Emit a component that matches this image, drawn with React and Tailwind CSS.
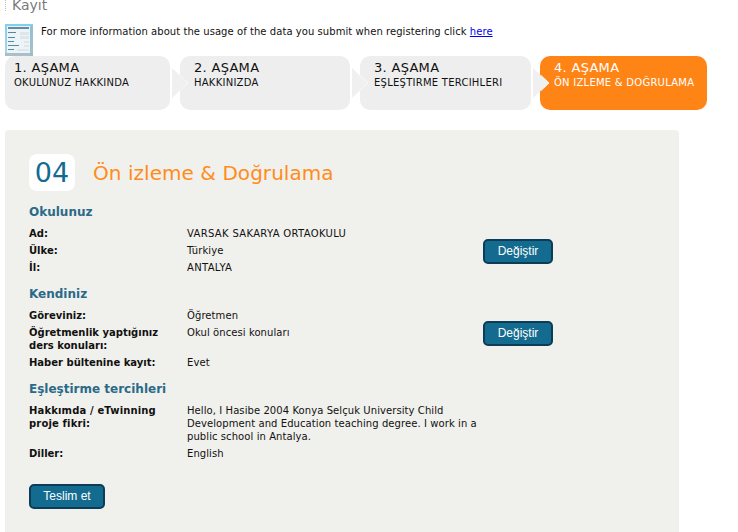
const steps = [
  { no: "1. AŞAMA", text: "OKULUNUZ HAKKINDA", width: "w-[165px] pl-[9px]" },
  { no: "2. AŞAMA", text: "HAKKINIZDA", width: "w-[170px] pl-[14px]" },
  { no: "3. AŞAMA", text: "EŞLEŞTIRME TERCIHLERI", width: "w-[171px] pl-[14px]" },
  { no: "4. AŞAMA", text: "ÖN IZLEME & DOĞRULAMA", width: "w-[167px] pl-[14px]", active: true },
];

const Row = ({ label, children }) => (
  <div className="flex py-[2px]">
    <div className="w-[158px] shrink-0 pr-3 font-bold">{label}</div>
    <div className="flex-1 tracking-[0.08px]">{children}</div>
  </div>
);

const Btn = ({ children, className = "" }) => (
  <button
    className={`h-[25px] rounded-[5px] border-2 border-[#0d3d56] bg-[#136b8f] text-[12px] text-white font-['Liberation_Sans',sans-serif] ${className}`}
  >
    {children}
  </button>
);

const DocIcon = () => (
  <svg width="28" height="32" viewBox="0 0 28 32" className="shrink-0">
    <defs>
      <linearGradient id="frame" x1="0" y1="0" x2="0" y2="1">
        <stop offset="0" stopColor="#7fd0ee" />
        <stop offset="1" stopColor="#b5d3df" />
      </linearGradient>
    </defs>
    <rect x="0" y="0" width="28" height="32" fill="url(#frame)" />
    <rect x="2" y="2" width="23" height="27" fill="#eef4f6" />
    <rect x="3" y="3" width="21" height="2" fill="#5f8da3" />
    <rect x="3" y="8" width="8" height="1" fill="#4f8aa6" />
    <rect x="15" y="8" width="9" height="3" fill="#dde7eb" />
    <rect x="3" y="13" width="7" height="1" fill="#4f8aa6" />
    <rect x="15" y="12" width="9" height="3" fill="#dde7eb" />
    <rect x="3" y="17" width="6" height="1" fill="#4f8aa6" />
    <rect x="19" y="17" width="5" height="2" fill="#dde7eb" />
    <rect x="3" y="21" width="11" height="1" fill="#4f8aa6" />
    <rect x="19" y="21" width="5" height="2" fill="#dde7eb" />
    <rect x="3" y="25" width="6" height="1" fill="#4f8aa6" />
    <rect x="12" y="25" width="12" height="2" fill="#dde7eb" />
    <rect x="25" y="2" width="3" height="30" fill="#9fb4bd" opacity="0.6" />
    <rect x="0" y="29" width="28" height="3" fill="#9fb4bd" opacity="0.6" />
  </svg>
);

export default function App() {
  return (
    <div className="w-[738px] h-[532px] overflow-hidden bg-white font-['DejaVu_Sans',sans-serif] text-[#111] text-[10px] leading-[13px]">
      <div className="h-[24px] pl-[5px] flex items-start">
        <div className="h-[11px] border-l border-dotted border-[#bbb]" />
        <span className="ml-[6px] -mt-[5px] text-[14px] leading-[20px] text-[#7a7a7a]">Kayıt</span>
      </div>

      <div className="h-[32px] pl-[5px] flex items-start">
        <DocIcon />
        <p className="ml-[8px] mt-[1px] text-[10px] tracking-[0.06px]">
          For more information about the usage of the data you submit when registering click{" "}
          <a href="#" className="text-[#0000ee] underline">here</a>
        </p>
      </div>

      <div className="pl-[5px] flex gap-[10px]">
        {steps.map((s, i) => (
          <div
            key={s.no}
            className={`relative h-[54px] rounded-[10px] pt-[5px] ${s.width} ${
              s.active ? "-ml-[1px] bg-[#ff8416] text-white" : "bg-[#eeeeee]"
            }`}
          >
            <div className="text-[13px] leading-[14px] tracking-[0.3px]">{s.no}</div>
            <div className="mt-[2px] text-[10px] leading-[12px] tracking-[0.25px]">{s.text}</div>
            {i < 3 && (
              <svg width="16" height="30" viewBox="0 0 16 30" className="absolute left-[calc(100%+2px)] top-[12px] z-10">
                <path d="M0 0 L16 15 L0 30 Z" fill="#f0f0f0" />
                <path d="M8 7.5 L16 15 L8 22.5" fill="none" stroke="#f8f8f8" />
              </svg>
            )}
          </div>
        ))}
      </div>

      <div className="ml-[5px] mt-[20px] w-[674px] h-[420px] rounded-[4px] bg-[#f0f0ec] pl-[24px] pt-[24px]">
        <div className="flex items-center">
          <div className="w-[46px] h-[37px] rounded-[8px] bg-white text-center text-[27px] leading-[37px] text-[#136b8f]">04</div>
          <h1 className="ml-[18px] mt-[1px] text-[20px] leading-[26px] tracking-[0.05px] text-[#ff8c1a]">Ön izleme &amp; Doğrulama</h1>
        </div>

        <h2 className="mt-[13px] text-[12px] leading-[16px] font-bold text-[#2a6a88]">Okulunuz</h2>
        <div className="mt-[5px] flex items-start">
          <div className="w-[454px]">
            <Row label="Ad:"><span className="tracking-[0.33px]">VARSAK SAKARYA ORTAOKULU</span></Row>
            <Row label="Ülke:">Türkiye</Row>
            <Row label="İl:"><span className="tracking-[0.33px]">ANTALYA</span></Row>
          </div>
          <Btn className="mt-[14px] w-[70px]">Değiştir</Btn>
        </div>

        <h2 className="mt-[10px] text-[12px] leading-[16px] font-bold text-[#2a6a88]">Kendiniz</h2>
        <div className="mt-[5px] flex items-start">
          <div className="w-[454px]">
            <Row label="Göreviniz:">Öğretmen</Row>
            <Row label="Öğretmenlik yaptığınız ders konuları:">Okul öncesi konuları</Row>
            <Row label="Haber bültenine kayıt:">Evet</Row>
          </div>
          <Btn className="mt-[14px] w-[70px]">Değiştir</Btn>
        </div>

        <h2 className="mt-[10px] text-[12px] leading-[16px] font-bold text-[#2a6a88]">Eşleştirme tercihleri</h2>
        <div className="mt-[5px] w-[454px]">
          <Row label={<span className="tracking-[0.15px]">Hakkımda / eTwinning proje fikri:</span>}>
            Hello, I Hasibe 2004 Konya Selçuk University Child Development and Education teaching degree. I work in a public school in Antalya.
          </Row>
          <Row label="Diller:">English</Row>
        </div>

        <Btn className="mt-[22px] w-[76px]">Teslim et</Btn>
      </div>
    </div>
  );
}
